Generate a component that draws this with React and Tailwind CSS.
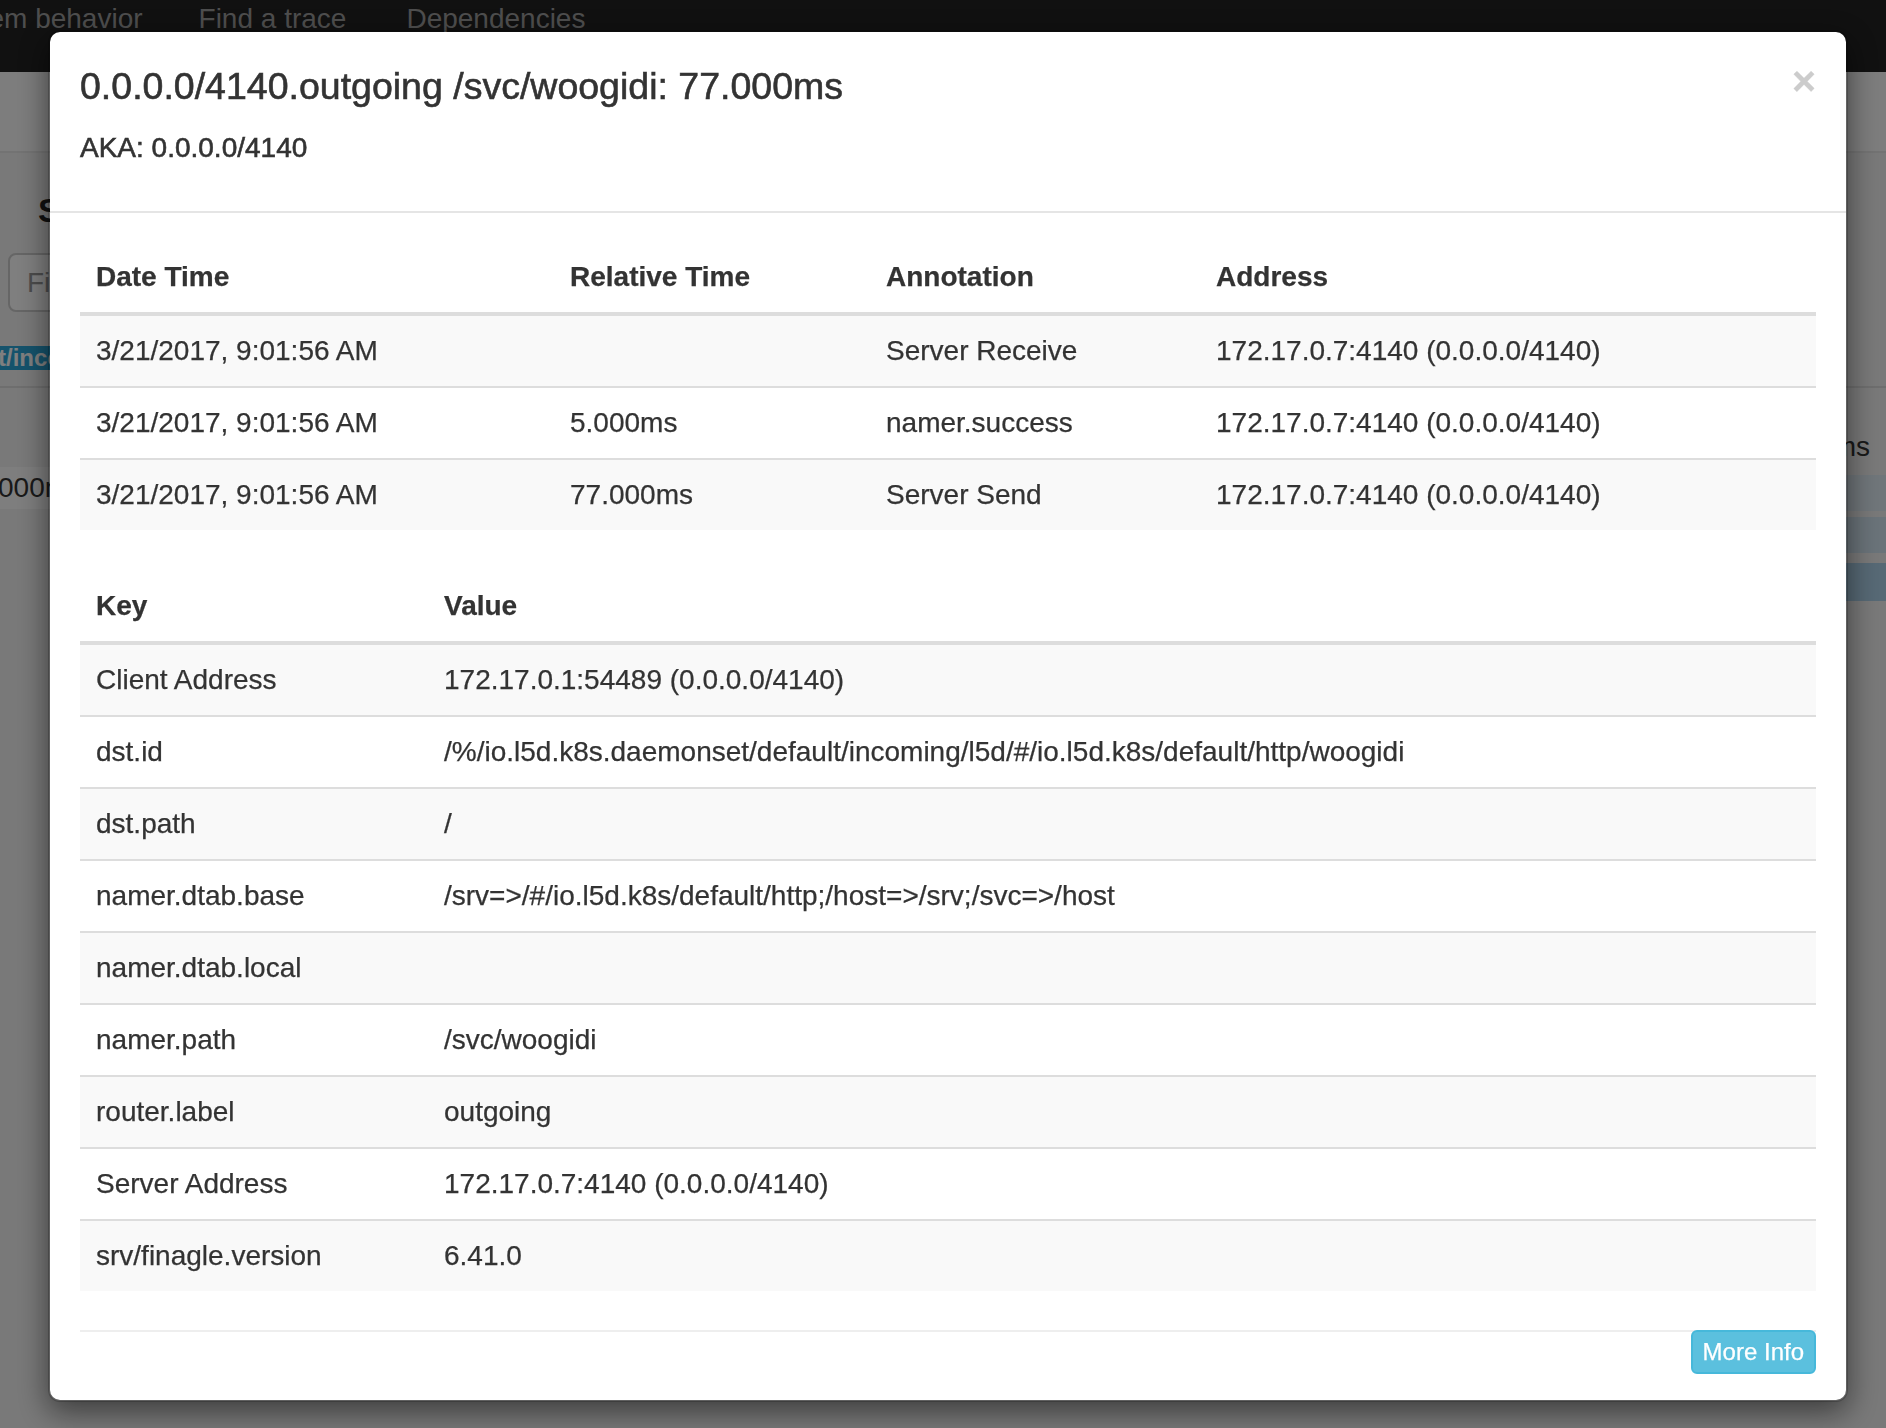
import React from "react";

const annotations = [
    { date: "3/21/2017, 9:01:56 AM", relative: "", annotation: "Server Receive", address: "172.17.0.7:4140 (0.0.0.0/4140)" },
    { date: "3/21/2017, 9:01:56 AM", relative: "5.000ms", annotation: "namer.success", address: "172.17.0.7:4140 (0.0.0.0/4140)" },
    { date: "3/21/2017, 9:01:56 AM", relative: "77.000ms", annotation: "Server Send", address: "172.17.0.7:4140 (0.0.0.0/4140)" },
];

const binaryAnnotations = [
    ["Client Address", "172.17.0.1:54489 (0.0.0.0/4140)"],
    ["dst.id", "/%/io.l5d.k8s.daemonset/default/incoming/l5d/#/io.l5d.k8s/default/http/woogidi"],
    ["dst.path", "/"],
    ["namer.dtab.base", "/srv=>/#/io.l5d.k8s/default/http;/host=>/srv;/svc=>/host"],
    ["namer.dtab.local", ""],
    ["namer.path", "/svc/woogidi"],
    ["router.label", "outgoing"],
    ["Server Address", "172.17.0.7:4140 (0.0.0.0/4140)"],
    ["srv/finagle.version", "6.41.0"],
];

function Th({ children }) {
    return (
        <th className="border-b-4 border-[#dddddd] px-[16px] py-[15px] text-left font-bold leading-[40px]">
            {children}
        </th>
    );
}

function Td({ children }) {
    return (
        <td className="border-t-2 border-[#dddddd] px-[16px] py-[15px] align-top leading-[40px] whitespace-nowrap">
            {children}
        </td>
    );
}

function SpanModal() {
    return (
        <div className="ml-[48px] mt-[30px] w-[1800px] rounded-[12px] border-2 border-[rgba(0,0,0,0.2)] bg-white bg-clip-padding shadow-[0_10px_30px_rgba(0,0,0,0.5)] [-webkit-text-stroke:0.25px_currentColor]">
            {/* header */}
            <div className="flex items-start justify-between border-b-2 border-[#e5e5e5] px-[30px] pt-[34px] pb-[48px]">
                <div className="[-webkit-text-stroke:0.6px_currentColor]">
                    <h4 className="text-[37.5px] leading-[40px] font-medium">0.0.0.0/4140.outgoing /svc/woogidi: 77.000ms</h4>
                    <h5 className="mt-[26px] text-[28px] leading-[31px] font-medium">AKA: 0.0.0.0/4140</h5>
                </div>
                <button className="-mt-[5px] text-[41px] leading-[41px] font-bold text-[#cccccc] [text-shadow:0_2px_0_#fff]">×</button>
            </div>

            {/* body */}
            <div className="px-[30px] pt-[29px] pb-[26px]">
                <table className="w-full table-fixed">
                    <colgroup>
                        <col className="w-[474px]" />
                        <col className="w-[316px]" />
                        <col className="w-[330px]" />
                        <col />
                    </colgroup>
                    <thead>
                        <tr>
                            <Th>Date Time</Th>
                            <Th>Relative Time</Th>
                            <Th>Annotation</Th>
                            <Th>Address</Th>
                        </tr>
                    </thead>
                    <tbody>
                        {annotations.map((a, i) => (
                            <tr key={i} className={i % 2 === 0 ? "bg-[#f9f9f9]" : ""}>
                                <Td>{a.date}</Td>
                                <Td>{a.relative}</Td>
                                <Td>{a.annotation}</Td>
                                <Td>{a.address}</Td>
                            </tr>
                        ))}
                    </tbody>
                </table>

                <table className="mt-[41px] w-full table-fixed">
                    <colgroup>
                        <col className="w-[348px]" />
                        <col />
                    </colgroup>
                    <thead>
                        <tr>
                            <Th>Key</Th>
                            <Th>Value</Th>
                        </tr>
                    </thead>
                    <tbody>
                        {binaryAnnotations.map(([key, value], i) => (
                            <tr key={key} className={i % 2 === 0 ? "bg-[#f9f9f9]" : ""}>
                                <Td>{key}</Td>
                                <Td>{value}</Td>
                            </tr>
                        ))}
                    </tbody>
                </table>

                <div className="mt-[39px] flex justify-end border-t-2 border-[#eeeeee]">
                    <button className="-mt-[2px] rounded-[6px] border-2 border-[#46b8da] bg-[#5bc0de] px-[10px] py-[2px] text-[24px] leading-[36px] text-white">
                        More Info
                    </button>
                </div>
            </div>
        </div>
    );
}

export default function App() {
    return (
        <div className="relative h-screen overflow-hidden bg-[#f2f2f2] font-['Liberation_Sans',Arial,sans-serif] text-[28px] text-[#333333]">
            {/* page underneath the backdrop */}
            <nav className="h-[72px] bg-[#222222] pt-px">
                <div className="-ml-[66px] -mt-[2px] flex leading-[40px] text-[#9d9d9d]">
                    <span className="mr-[56px]">System behavior</span>
                    <span className="mr-[60px]">Find a trace</span>
                    <span>Dependencies</span>
                </div>
            </nav>
            <div className="h-[81px] border-b-2 border-[#e7e7e7] bg-[#fafafa]" />

            <div className="h-[235px] border-b-2 border-[#dddddd] pt-[37px]">
                <h3 className="ml-[38px] text-[34px] leading-[40px] font-bold text-[#222222]">Spans</h3>
                <div className="ml-[8px] mt-[23px] h-[59px] w-[600px] rounded-[8px] border-2 border-[#cccccc] bg-white pl-[17px] leading-[55px] text-[#999999]">
                    Filter spans
                </div>
                <div className="mt-[34px] h-[24px] w-[700px] bg-[#2aa6d8] text-[24px] leading-[24px] font-bold text-white">
                    <span className="-ml-[2px]">t/incoming</span>
                </div>
            </div>

            <div className="flex justify-between">
                <div className="mt-[79px] h-[42px] w-[700px] bg-[#fdfdfd] leading-[42px]">
                    <span className="-ml-[2px]">000ms</span>
                </div>
                <div className="w-[240px] pt-[43px]">
                    <div className="pr-[16px] text-right leading-[32px]">77.000ms</div>
                    <div className="mt-[12px] h-[36px] bg-[#e0ecf4]" />
                    <div className="mt-[6px] h-[36px] bg-[#d4e6f2]" />
                    <div className="mt-[10px] h-[38px] bg-[#aed2ea]" />
                </div>
            </div>

            {/* backdrop + modal */}
            <div className="fixed inset-0 bg-black/50">
                <SpanModal />
            </div>
        </div>
    );
}
